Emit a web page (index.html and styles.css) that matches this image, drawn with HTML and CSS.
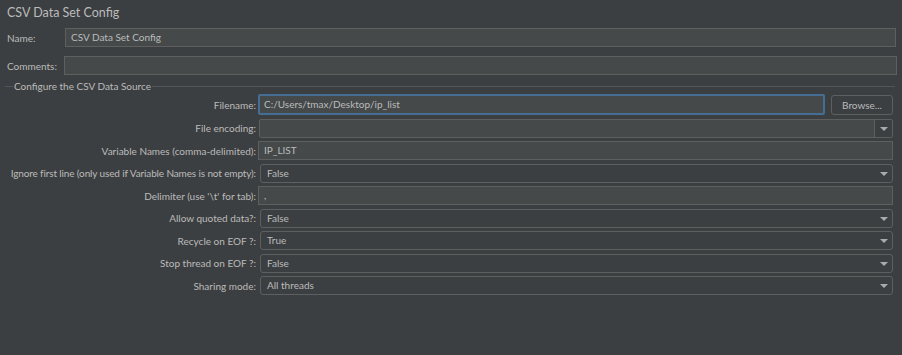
FILE: index.html
```html
<!DOCTYPE html>
<html lang="en">
<head>
    <meta charset="UTF-8">
    <title>CSV Data Set Config</title>
    <link rel="stylesheet" href="styles.css">
</head>
<body>
    <div class="panel">
        <div class="title">CSV Data Set Config</div>

        <div class="top-row">
            <span class="top-label">Name:</span>
            <div class="text-field name-field">CSV Data Set Config</div>
        </div>
        <div class="top-row">
            <span class="top-label">Comments:</span>
            <div class="text-field comments-field"></div>
        </div>

        <div class="group">
            <div class="group-title"><span>Configure the CSV Data Source</span></div>

            <div class="form">
                <label>Filename:</label>
                <div class="file-row">
                    <div class="text-field focused">C:/Users/tmax/Desktop/ip_list</div>
                    <button class="browse">Browse...</button>
                </div>

                <label>File encoding:</label>
                <div class="combo editable">
                    <div class="combo-text"></div>
                    <div class="combo-btn"><span class="arrow"></span></div>
                </div>

                <label>Variable Names (comma-delimited):</label>
                <div class="text-field">IP_LIST</div>

                <label class="long">Ignore first line (only used if Variable Names is not empty):</label>
                <div class="combo">
                    <div class="combo-text">False</div>
                    <div class="combo-btn"><span class="arrow"></span></div>
                </div>

                <label>Delimiter (use '\t' for tab):</label>
                <div class="text-field">,</div>

                <label>Allow quoted data?:</label>
                <div class="combo">
                    <div class="combo-text">False</div>
                    <div class="combo-btn"><span class="arrow"></span></div>
                </div>

                <label>Recycle on EOF ?:</label>
                <div class="combo">
                    <div class="combo-text">True</div>
                    <div class="combo-btn"><span class="arrow"></span></div>
                </div>

                <label>Stop thread on EOF ?:</label>
                <div class="combo">
                    <div class="combo-text">False</div>
                    <div class="combo-btn"><span class="arrow"></span></div>
                </div>

                <label>Sharing mode:</label>
                <div class="combo">
                    <div class="combo-text">All threads</div>
                    <div class="combo-btn"><span class="arrow"></span></div>
                </div>
            </div>
        </div>
    </div>
</body>
</html>
```

FILE: styles.css
```css
body {
    margin: 0;
    background: #3c3f41;
    color: #bbbbbb;
    font-family: Lato, "Open Sans", sans-serif;
    font-size: 10px;
    height: 355px;
    overflow: hidden;
}
.panel {
    padding: 0 5px 0 7px;
}
.title {
    font-size: 12.5px;
    height: 24px;
    line-height: 24px;
    padding-top: 1px;
    margin-bottom: 3px;
}
.top-row {
    display: flex;
    align-items: center;
    height: 19px;
    margin-bottom: 9px;
}
.top-label {
    width: 58px;
}
.text-field {
    box-sizing: border-box;
    height: 19px;
    line-height: 17px;
    background: #45494a;
    border: 1px solid #5e6060;
    padding: 0 5px;
    white-space: nowrap;
    overflow: hidden;
}
.name-field { width: 831px; }
.comments-field { width: 834px; margin-left: -1px; }

.group {
    margin-left: -2px;
    margin-right: 2px;
    padding-top: 2px;
}
.group-title {
    position: relative;
    height: 12px;
    line-height: 12px;
    border-top: 1px solid #515658;
}
.group-title span {
    position: absolute;
    left: 8px;
    top: -7px;
    background: #3c3f41;
    padding: 0 1px;
}
.form {
    display: grid;
    grid-template-columns: 251px 1fr;
    column-gap: 2px;
    row-gap: 3.5px;
    align-items: center;
    margin-top: -5px;
    padding-right: 2px;
}
.form label {
    text-align: right;
    white-space: nowrap;
}
.form label.long {
    letter-spacing: -0.13px;
}
.file-row {
    display: flex;
    gap: 6px;
    height: 21px;
}
.file-row .text-field {
    flex: 1;
    height: 21px;
    line-height: 17px;
    border: 2px solid #466d94;
    border-radius: 2px;
    padding-left: 4px;
}
.browse {
    width: 62px;
    height: 20px;
    margin-top: 1px;
    background: #3c3f41;
    border: 1px solid #5e6060;
    border-radius: 3px;
    color: #bbbbbb;
    font-family: inherit;
    font-size: 10px;
    padding: 0;
}
.combo {
    box-sizing: border-box;
    display: flex;
    height: 19px;
    margin-left: 2px;
    border: 1px solid #5e6060;
    border-radius: 3px;
    background: #3c3f41;
}
.combo.editable {
    margin-left: 1px;
    border-radius: 2px;
}
.combo-text {
    flex: 1;
    line-height: 17px;
    padding-left: 6px;
}
.combo.editable .combo-text {
    background: #45494a;
}
.combo-btn {
    width: 17px;
    display: flex;
    align-items: center;
    justify-content: center;
}
.combo.editable .combo-btn {
    border-left: 1px solid #5e6060;
}
.arrow {
    width: 0;
    height: 0;
    border-left: 4px solid transparent;
    border-right: 4px solid transparent;
    border-top: 4px solid #a9abad;
    margin-top: 1px;
}
```
